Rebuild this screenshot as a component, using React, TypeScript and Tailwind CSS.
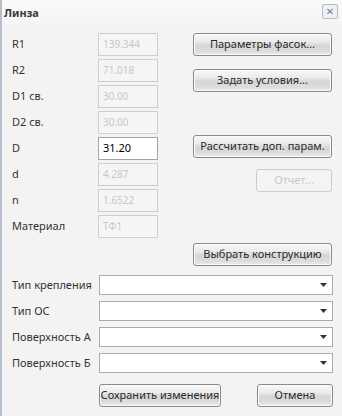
const params = [
  { label: "R1", value: "139.344" },
  { label: "R2", value: "71.018" },
  { label: "D1 св.", value: "30.00" },
  { label: "D2 св.", value: "30.00" },
  { label: "D", value: "31.20", active: true },
  { label: "d", value: "4.287" },
  { label: "n", value: "1.6522" },
  { label: "Материал", value: "ТФ1" },
];

const selects = ["Тип крепления", "Тип ОС", "Поверхность А", "Поверхность Б"];

const btn =
  "h-[23px] rounded-[3px] border border-[#8a8a8a] bg-[linear-gradient(to_bottom,#f8f8f8,#ebebeb_35%,#d6d6d6_55%,#dcdcdc_80%,#ebebeb)] text-[11px] text-[#2a2a2a] shadow-[inset_0_0_0_1px_#fbfbfb] flex items-center justify-center";

export default function App() {
  return (
    <div
      className="w-[342px] h-[416px] bg-[#f3f3f3] border-l-2 border-[#b5c0cf] flex flex-col text-[#333]"
      style={{ fontFamily: '"Noto Sans", "DejaVu Sans", sans-serif' }}
    >
      {/* Title */}
      <div className="h-[26px] flex items-center justify-between pl-[2px] pr-[4px] bg-[linear-gradient(to_bottom,#fbfbfb,#f4f4f4)]">
        <span className="text-[11px] font-bold text-[#3a3a3a]">Линза</span>
        <div className="w-[16px] h-[15px] mb-[4px] rounded-[2px] border border-[#b4bccb] bg-[#eef1f6] flex items-center justify-center text-[10px] leading-none text-[#6d7d99]">
          ✕
        </div>
      </div>

      <div className="flex pl-[10px] pt-[7px]">
        {/* Parameters */}
        <div className="flex flex-col gap-[3px]">
          {params.map((p) => (
            <div key={p.label} className="flex items-center h-[23px]">
              <span className="w-[86px] text-[11px]">{p.label}</span>
              <div
                className={
                  p.active
                    ? "w-[60px] h-[23px] border border-[#a4a4a4] bg-white text-[11px] text-black px-[4px] flex items-center"
                    : "w-[60px] h-[23px] border border-[#cfcfcf] bg-[#f5f5f5] text-[10px] text-[#c8c8c8] px-[4px] flex items-center"
                }
              >
                {p.value}
              </div>
            </div>
          ))}
        </div>

        {/* Buttons */}
        <div className="flex flex-col items-end ml-[35px] w-[139px]">
          <div className={btn + " w-[139px]"}>Параметры фасок...</div>
          <div className={btn + " w-[139px] mt-[13px]"}>Задать условия...</div>
          <div className={btn + " w-[139px] mt-[43px]"}>Рассчитать доп. парам.</div>
          <div className="w-[76px] h-[23px] mt-[11px] rounded-[3px] border border-[#cdcdcd] bg-[#f4f4f4] text-[11px] text-[#c8c8c8] flex items-center justify-center">
            Отчет...
          </div>
          <div className={btn + " w-[139px] mt-[51px]"}>Выбрать конструкцию</div>
        </div>
      </div>

      {/* Selects */}
      <div className="flex flex-col gap-[6px] pl-[10px] mt-[9px]">
        {selects.map((s) => (
          <div key={s} className="flex items-center h-[20px]">
            <span className="w-[87px] text-[11px]">{s}</span>
            <div className="w-[234px] h-[20px] border border-[#ababab] bg-white flex items-center justify-end pr-[5px]">
              <svg width="7" height="4" viewBox="0 0 7 4">
                <path d="M0 0h7L3.5 4z" fill="#333" />
              </svg>
            </div>
          </div>
        ))}
      </div>

      {/* Footer buttons */}
      <div className="flex pl-[97px] mt-[11px] gap-[36px]">
        <div className={btn + " w-[122px] h-[22px]"}>Сохранить изменения</div>
        <div className={btn + " w-[76px] h-[22px]"}>Отмена</div>
      </div>
    </div>
  );
}
